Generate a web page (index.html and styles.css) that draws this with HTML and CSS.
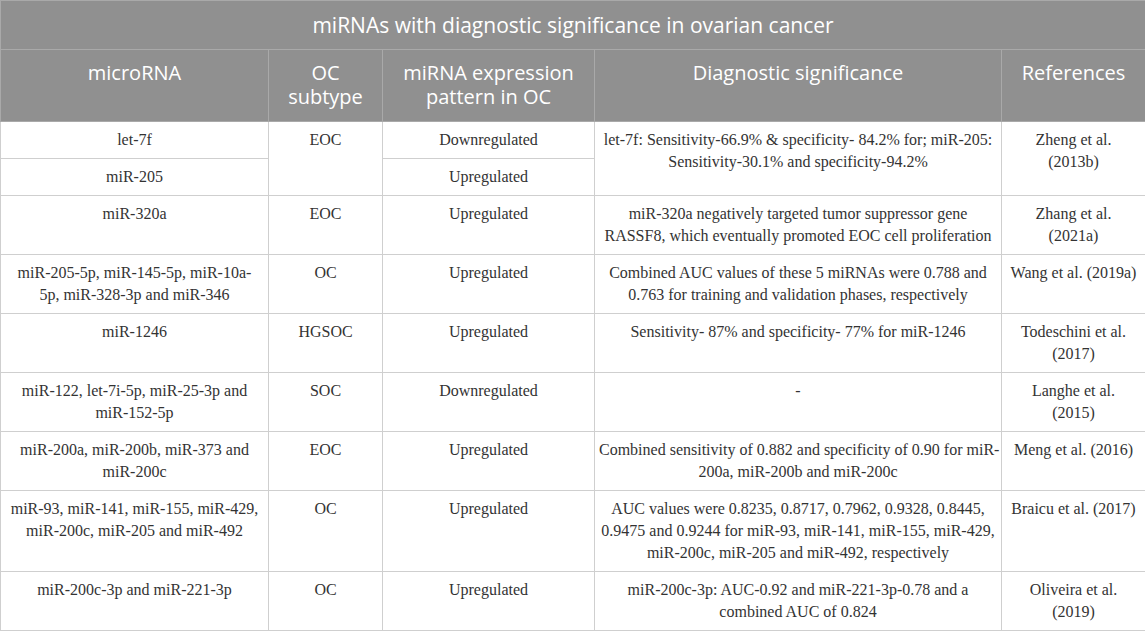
FILE: index.html
```html
<!DOCTYPE html>
<html lang="en">
<head>
  <meta charset="UTF-8" />
  <title>miRNAs with diagnostic significance in ovarian cancer</title>
  <link rel="stylesheet" href="styles.css">
</head>
<body>
  <table class="data-table">
    <colgroup>
      <col class="col-mirna">
      <col class="col-subtype">
      <col class="col-pattern">
      <col class="col-significance">
      <col class="col-ref">
    </colgroup>
    <thead>
      <tr>
        <th colspan="5" class="table-title">miRNAs with diagnostic significance in ovarian cancer</th>
      </tr>
      <tr>
        <th>microRNA</th>
        <th>OC<br>subtype</th>
        <th>miRNA expression<br>pattern in OC</th>
        <th>Diagnostic significance</th>
        <th>References</th>
      </tr>
    </thead>
    <tbody>
      <tr>
        <td>let-7f</td>
        <td rowspan="2">EOC</td>
        <td>Downregulated</td>
        <td rowspan="2">let-7f: Sensitivity-66.9% &amp; specificity- 84.2% for; miR-205:<br>Sensitivity-30.1% and specificity-94.2%</td>
        <td rowspan="2">Zheng et al.<br>(2013b)</td>
      </tr>
      <tr>
        <td>miR-205</td>
        <td>Upregulated</td>
      </tr>
      <tr>
        <td>miR-320a</td>
        <td>EOC</td>
        <td>Upregulated</td>
        <td>miR-320a negatively targeted tumor suppressor gene<br>RASSF8, which eventually promoted EOC cell proliferation</td>
        <td>Zhang et al.<br>(2021a)</td>
      </tr>
      <tr>
        <td>miR-205-5p, miR-145-5p, miR-10a-<br>5p, miR-328-3p and miR-346</td>
        <td>OC</td>
        <td>Upregulated</td>
        <td>Combined AUC values of these 5 miRNAs were 0.788 and<br>0.763 for training and validation phases, respectively</td>
        <td>Wang et al. (2019a)</td>
      </tr>
      <tr>
        <td>miR-1246</td>
        <td>HGSOC</td>
        <td>Upregulated</td>
        <td>Sensitivity- 87% and specificity- 77% for miR-1246</td>
        <td>Todeschini et al.<br>(2017)</td>
      </tr>
      <tr>
        <td>miR-122, let-7i-5p, miR-25-3p and<br>miR-152-5p</td>
        <td>SOC</td>
        <td>Downregulated</td>
        <td>-</td>
        <td>Langhe et al.<br>(2015)</td>
      </tr>
      <tr>
        <td>miR-200a, miR-200b, miR-373 and<br>miR-200c</td>
        <td>EOC</td>
        <td>Upregulated</td>
        <td>Combined sensitivity of 0.882 and specificity of 0.90 for miR-<br>200a, miR-200b and miR-200c</td>
        <td>Meng et al. (2016)</td>
      </tr>
      <tr>
        <td>miR-93, miR-141, miR-155, miR-429,<br>miR-200c, miR-205 and miR-492</td>
        <td>OC</td>
        <td>Upregulated</td>
        <td>AUC values were 0.8235, 0.8717, 0.7962, 0.9328, 0.8445,<br>0.9475 and 0.9244 for miR-93, miR-141, miR-155, miR-429,<br>miR-200c, miR-205 and miR-492, respectively</td>
        <td>Braicu et al. (2017)</td>
      </tr>
      <tr>
        <td>miR-200c-3p and miR-221-3p</td>
        <td>OC</td>
        <td>Upregulated</td>
        <td>miR-200c-3p: AUC-0.92 and miR-221-3p-0.78 and a<br>combined AUC of 0.824</td>
        <td>Oliveira et al.<br>(2019)</td>
      </tr>
    </tbody>
  </table>
</body>
</html>
```

FILE: styles.css
```css
body {
  margin: 0;
  background: #fff;
}
.data-table {
  width: 1145px;
  border-collapse: collapse;
  table-layout: fixed;
}
.col-mirna { width: 268px; }
.col-subtype { width: 114px; }
.col-pattern { width: 212px; }
.col-significance { width: 407px; }
.col-ref { width: 144px; }

.data-table th {
  background: #909090;
  color: #fff;
  font-family: "Open Sans", sans-serif;
  font-weight: 400;
  font-size: 20px;
  line-height: 24px;
  padding: 11px 6px 12px;
  text-align: center;
  vertical-align: top;
  border: 1px solid #a9a9a9;
}
.data-table th.table-title {
  font-size: 21px;
  line-height: 26px;
  padding: 11px 6px 11px;
}
.data-table td {
  font-family: "Liberation Serif", serif;
  font-size: 16px;
  line-height: 22px;
  color: #333;
  padding: 7px 4px 7px;
  text-align: center;
  white-space: nowrap;
  vertical-align: top;
  border: 1px solid #cfcfcf;
}
```
